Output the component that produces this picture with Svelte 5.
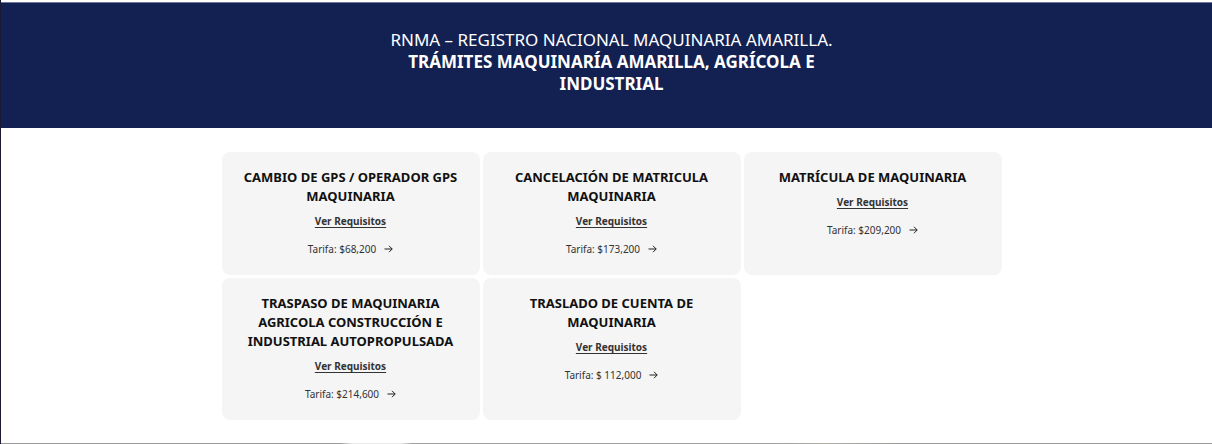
<script>
  const items = [
    { title: 'CAMBIO DE GPS / OPERADOR GPS MAQUINARIA', fee: '$68,200' },
    { title: 'CANCELACIÓN DE MATRICULA MAQUINARIA', fee: '$173,200' },
    { title: 'MATRÍCULA DE MAQUINARIA', fee: '$209,200' },
    { title: 'TRASPASO DE MAQUINARIA AGRICOLA CONSTRUCCIÓN E INDUSTRIAL AUTOPROPULSADA', fee: '$214,600' },
    { title: 'TRASLADO DE CUENTA DE MAQUINARIA', fee: '$ 112,000' }
  ];
</script>

<main>
  <header>
    <h1>RNMA – REGISTRO NACIONAL MAQUINARIA AMARILLA. <strong>TRÁMITES MAQUINARÍA AMARILLA, AGRÍCOLA E INDUSTRIAL</strong></h1>
  </header>
  <section>
    <div class="grid">
      {#each items as item}
        <article>
          <h2>{item.title}</h2>
          <a href="#requisitos">Ver Requisitos</a>
          <p>
            <span>Tarifa: {item.fee}</span>
            <svg viewBox="0 0 9 8" aria-hidden="true"><path d="M0.5 4H8.2M5 0.8L8.2 4L5 7.2" /></svg>
          </p>
        </article>
      {/each}
    </div>
  </section>
  <footer></footer>
</main>

<style>
  :global(body) { background: #fff; }
  main { border-left: 1px solid #1c1a33; padding-top: 2px; font-family: "Noto Sans", "Open Sans", sans-serif; }
  header { background: #132152; border-top: 1px solid #6f7698; color: #fff; padding: 26px 16px 33px 26px; }
  h1 { max-width: 480px; margin: 0 auto; text-align: center; font-size: 17px; line-height: 22px; font-weight: 400; }
  strong { display: block; font-weight: 700; }
  section { padding: 24px 0 23px 10px; }
  .grid { display: grid; grid-template-columns: repeat(3, 1fr); gap: 3px; max-width: 780px; margin: 0 auto; }
  article { display: flex; flex-direction: column; align-items: center; background: #f5f5f5; border-radius: 8px; padding: 16px 16px 18px; text-align: center; color: #333; }
  h2 { margin: 0 0 8px; font-size: 13px; line-height: 19px; font-weight: 700; color: #111; }
  a { font-size: 10px; line-height: 14px; font-weight: 700; color: #333; text-decoration-thickness: 1px; text-underline-offset: 2px; }
  p { display: flex; align-items: center; gap: 8px; margin: 13px 0 0; font-size: 10px; line-height: 16px; }
  svg { width: 9px; height: 8px; fill: none; stroke: #222; stroke-width: 1; }
  footer { height: 1px; background: linear-gradient(90deg, #999 28%, #eaeaea 29%, #eaeaea 33%, #a0a0a0 34%, #a0a0a0 64%, #b0b0a8 68%, #999 74%); }
</style>
